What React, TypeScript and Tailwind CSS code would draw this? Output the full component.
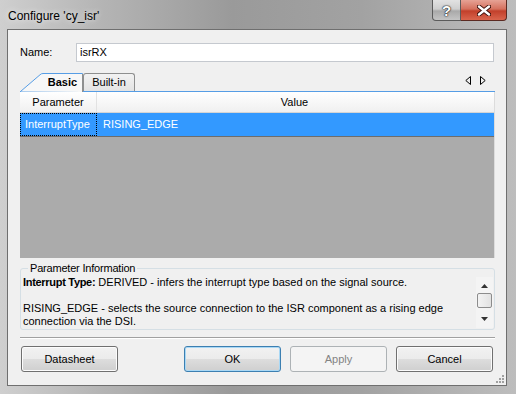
import React from 'react';

const FONT = "font-['Liberation_Sans',Arial,sans-serif]";

const WinButton: React.FC<{ label: string; focused?: boolean; disabled?: boolean }> = ({ label, focused, disabled }) => {
  const base = 'w-[97px] h-[26px] rounded-[3px] border text-[11px] flex items-center justify-center';
  if (disabled) {
    return <div className={`${base} border-[#adb2b5] bg-[#f4f4f4] text-[#838383]`}>{label}</div>;
  }
  return (
    <div
      className={`${base} ${
        focused ? 'border-[#3c7fb1] shadow-[inset_0_0_0_1px_#a9d8f5]' : 'border-[#707070] shadow-[inset_0_0_0_1px_#fcfcfc]'
      } bg-[linear-gradient(#f2f2f2_0%,#ebebeb_50%,#dddddd_51%,#cfcfcf_100%)] text-black`}
    >
      {label}
    </div>
  );
};

export default function App() {
  return (
    <div className={`${FONT} w-[516px] h-[394px] overflow-hidden bg-[linear-gradient(90deg,#cfcfcf_0%,#b4b4b4_20%,#9a9a9a_45%,#a2a2a2_70%,#bdbdbd_100%)] flex flex-col`}>
      {/* Title bar */}
      <div className="h-[29px] flex items-start justify-between pl-[8px] pr-[9px]">
        <span className="mt-[9px] text-[12px] leading-[14px] text-black [text-shadow:0_0_6px_#ffffff]">Configure 'cy_isr'</span>
        <div className="flex h-[21px]">
          <div className="w-[29px] h-full rounded-bl-[4px] border border-t-0 border-[#5b5b5b] bg-[linear-gradient(#e2e2e2_0%,#cfcfcf_45%,#a9a9a9_55%,#c4c4c4_100%)] flex items-center justify-center">
            <span className="text-[15px] font-bold leading-none text-white [text-shadow:0_0_1px_#222,0_0_1px_#222,0_0_2px_#333]">?</span>
          </div>
          <div className="w-[46px] h-full rounded-br-[4px] border border-l-0 border-t-0 border-[#5b2a22] bg-[linear-gradient(#e6a295_0%,#d5715e_45%,#c2402b_55%,#d9654d_100%)] flex items-center justify-center">
            <svg width="14" height="11" viewBox="0 0 14 11">
              <path d="M2 1.5 L12 9.5 M12 1.5 L2 9.5" stroke="#3a0e08" strokeWidth="4.2" strokeLinecap="round" />
              <path d="M2 1.5 L12 9.5 M12 1.5 L2 9.5" stroke="#ffffff" strokeWidth="2.4" strokeLinecap="round" />
            </svg>
          </div>
        </div>
      </div>

      {/* Client area */}
      <div className="relative ml-[7px] w-[500px] h-[357px] border border-[#6f6f6f] bg-[#f0f0f0] pl-[12px] pr-[11px] text-[11px] text-black">
        {/* Name row */}
        <div className="mt-[13px] flex items-center h-[19px]">
          <span className="w-[56px]">Name:</span>
          <div className="flex-1 mr-[1px] h-[19px] border border-[#c5c9cf] bg-white pl-[3px] flex items-center">isrRX</div>
        </div>

        {/* Tabs */}
        <div className="mt-[11px] h-[19px] flex items-end border-b border-[#569de5] relative">
          <div className="relative w-[63px] h-[18px] flex items-center justify-center pl-[22px] font-bold">
            <svg className="absolute left-0 top-0" width="63" height="19" viewBox="0 0 63 19">
              <path d="M0.5 18.5 L20 1.8 Q21.2 0.5 23 0.5 L62.5 0.5 L62.5 19" fill="#f7f7f7" stroke="#569de5" />
              <path d="M62.5 1 L62.5 19" stroke="#8e8f8f" />
            </svg>
            <span className="relative">Basic</span>
          </div>
          <div className="w-[52px] h-[18px] rounded-t-[3px] border border-b-0 border-[#8e8f8f] bg-[linear-gradient(#f2f2f2,#e3e3e3)] flex items-center justify-center">
            Built-in
          </div>
          <div className="ml-auto mr-[9px] mb-[6px] flex gap-[9px]">
            <svg width="6" height="9" viewBox="0 0 6 9">
              <path d="M5.5 0.5 L0.8 4.5 L5.5 8.5 Z" fill="none" stroke="#000" />
            </svg>
            <svg width="6" height="9" viewBox="0 0 6 9">
              <path d="M0.5 0.5 L5.2 4.5 L0.5 8.5 Z" fill="none" stroke="#000" />
            </svg>
          </div>
        </div>

        {/* Grid */}
        <div className="h-[166px] bg-[#ababab] flex flex-col border-r border-[#dcdcdc]">
          <div className="h-[21px] flex bg-[linear-gradient(#ffffff,#f0f0f0)] border-b border-[#d5d5d5]">
            <div className="w-[77px] border-r border-[#e2e2e2] flex items-center justify-center">Parameter</div>
            <div className="flex-1 flex items-center justify-center pr-[2px]">Value</div>
          </div>
          <div className="h-[24px] flex bg-[#3399ff] border-b border-[#6d6d6d] text-white">
            <div className="w-[77px] border border-dotted border-black flex items-center pl-[4px]">InterruptType</div>
            <div className="flex-1 flex items-center pl-[6px]">RISING_EDGE</div>
          </div>
        </div>

        {/* Parameter information */}
        <fieldset className="mt-[4px] h-[68px] border border-[#d5dfe5] rounded-[3px] pl-[2px] pr-[1px] flex">
          <legend className="ml-[5px] px-[2px] leading-[12px] tracking-[-0.2px]">Parameter Information</legend>
          <div className="flex w-full">
            <div className="flex-1 leading-[13px] mt-[2px]">
              <div>
                <span className="font-bold tracking-[-0.3px]">Interrupt Type:</span> DERIVED - infers the interrupt type based on the signal source.
              </div>
              <div className="h-[13px]" />
              <div>RISING_EDGE - selects the source connection to the ISR component as a rising edge</div>
              <div>connection via the DSI.</div>
            </div>
            {/* scrollbar */}
            <div className="w-[17px] mt-[3px] mb-[1px] bg-[#f4f4f4] flex flex-col items-center">
              <svg className="mt-[7px]" width="7" height="4" viewBox="0 0 7 4">
                <path d="M0 4 L3.5 0 L7 4 Z" fill="#333" />
              </svg>
              <div className="mt-[5px] w-[15px] h-[15px] rounded-[2px] border border-[#8c8c8c] bg-[linear-gradient(90deg,#f3f3f3,#e2e2e2)]" />
              <svg className="mt-[9px]" width="7" height="4" viewBox="0 0 7 4">
                <path d="M0 0 L7 0 L3.5 4 Z" fill="#333" />
              </svg>
            </div>
          </div>
        </fieldset>

        {/* Separator */}
        <div className="mt-[7px] h-[2px] border-t border-[#a0a0a0] border-b border-b-white" />

        {/* Buttons */}
        <div className="mt-[7px] flex pl-[1px] pr-[2px]">
          <WinButton label="Datasheet" />
          <div className="ml-auto flex gap-[9px]">
            <WinButton label="OK" focused />
            <WinButton label="Apply" disabled />
            <WinButton label="Cancel" />
          </div>
        </div>

        {/* Size grip */}
        <svg className="absolute right-[1px] bottom-[1px]" width="10" height="10" viewBox="0 0 10 10">
          <g fill="#a0a0a0">
            <rect x="7" y="1" width="2" height="2" />
            <rect x="4" y="4" width="2" height="2" />
            <rect x="7" y="4" width="2" height="2" />
            <rect x="1" y="7" width="2" height="2" />
            <rect x="4" y="7" width="2" height="2" />
            <rect x="7" y="7" width="2" height="2" />
          </g>
        </svg>
      </div>
    </div>
  );
}
